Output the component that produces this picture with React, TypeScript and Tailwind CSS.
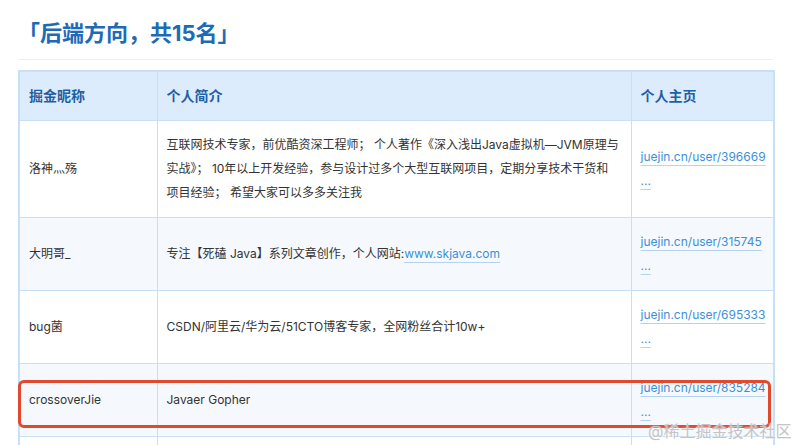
const rows = [
  {
    name: "洛神灬殇",
    bio: (
      <>
        互联网技术专家，前优酷资深工程师； 个人著作《深入浅出Java虚拟机—JVM原理与
        <br />
        实战》； 10年以上开发经验，参与设计过多个大型互联网项目，定期分享技术干货和
        <br />
        项目经验； 希望大家可以多多关注我
      </>
    ),
    id: "396669",
  },
  {
    name: "大明哥_",
    bio: (
      <>
        专注【死磕 Java】系列文章创作，个人网站:
        <a className="text-[#3d8fd8] underline decoration-[#b5d3ef] underline-offset-[4px]">www.skjava.com</a>
      </>
    ),
    id: "315745",
  },
  {
    name: "bug菌",
    bio: <>CSDN/阿里云/华为云/51CTO博客专家，全网粉丝合计10w+</>,
    id: "695333",
  },
  {
    name: "crossoverJie",
    bio: <>Javaer Gopher</>,
    id: "835284",
  },
];

export default function App() {
  return (
    <div className="min-h-[445px] bg-white px-[18px] font-['Inter','Noto_Sans_CJK_SC',sans-serif] text-[#333]">
      <h2 className="pt-[17px] text-[22px] leading-[33px] font-bold text-[#1d6bb6]">「后端方向，共15名」</h2>
      <div className="mt-[9px] w-[755px] border-t border-[#f0f0f0]" />
      <div className="relative mt-[10px] w-[755px]">
        <table className="w-[755px] table-fixed border-collapse border-2 border-[#c8e0f6] text-[12px] leading-[24px]">
          <colgroup>
            <col className="w-[138px]" />
            <col className="w-[474px]" />
            <col className="w-[143px]" />
          </colgroup>
          <thead>
            <tr className="bg-[#dcecfc] text-left text-[14px] font-bold text-[#1f5fa3]">
              <th className="border border-[#c8e0f6] px-[9px] py-[12px] font-bold">掘金昵称</th>
              <th className="border border-[#c8e0f6] px-[9px] py-[12px] font-bold">个人简介</th>
              <th className="border border-[#c8e0f6] px-[9px] py-[12px] font-bold">个人主页</th>
            </tr>
          </thead>
          <tbody>
            {rows.map((r, i) => (
              <tr key={r.id} className={i % 2 === 1 ? "bg-[#f5f9fe]" : "bg-white"}>
                <td className="border border-[#c8e0f6] px-[9px] py-[12px] align-middle">{r.name}</td>
                <td className="border border-[#c8e0f6] px-[9px] py-[12px] align-middle whitespace-nowrap">{r.bio}</td>
                <td className="border border-[#c8e0f6] px-[9px] py-[12px] align-middle whitespace-nowrap">
                  <a className="text-[#3d8fd8] underline decoration-[#b5d3ef] underline-offset-[4px]">
                    juejin.cn/user/{r.id}
                    <br />
                    ...
                  </a>
                </td>
              </tr>
            ))}
            <tr className="bg-white">
              <td className="border border-[#c8e0f6] py-[12px]">&nbsp;</td>
              <td className="border border-[#c8e0f6] py-[12px]">&nbsp;</td>
              <td className="border border-[#c8e0f6] py-[12px]">&nbsp;</td>
            </tr>
          </tbody>
        </table>
        <div className="pointer-events-none absolute left-0 top-[310px] h-[48px] w-[753px] rounded-[6px] border-[3px] border-[#e0492c]" />
      </div>
      <div className="pointer-events-none absolute left-[648px] top-[420px] text-[16px] leading-[22px] text-[#c4c4c4] [text-shadow:0_0_2px_#fff]">
        @稀土掘金技术社区
      </div>
    </div>
  );
}
